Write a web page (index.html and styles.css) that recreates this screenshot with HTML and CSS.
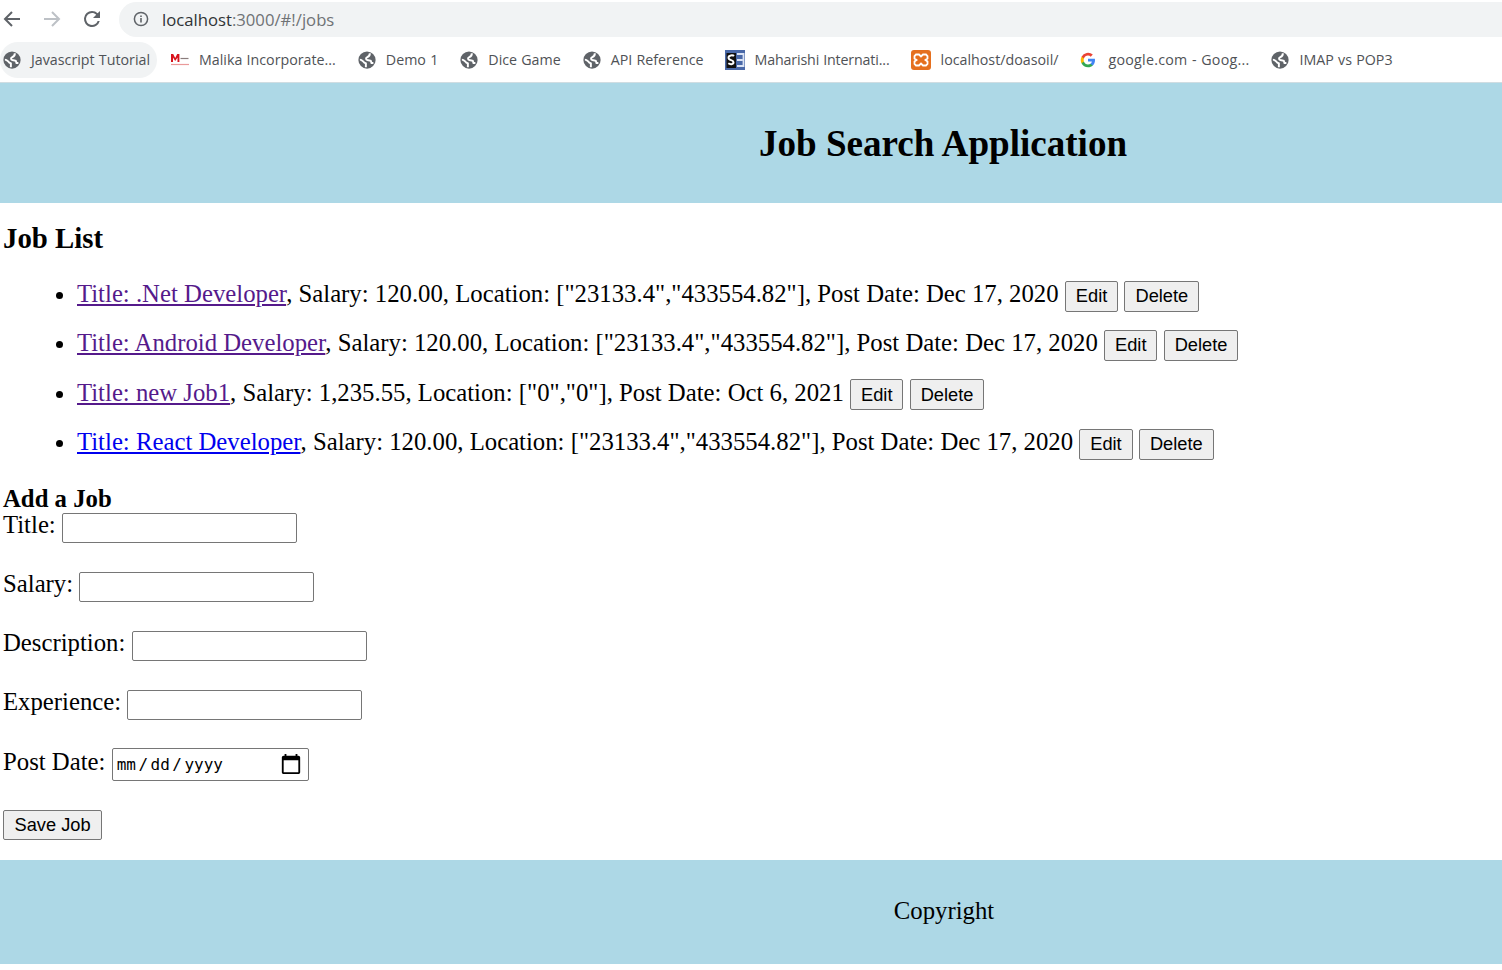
FILE: index.html
```html
<!DOCTYPE html>
<html lang="en">
<head>
<meta charset="utf-8">
<title>Job Search Application</title>
<link rel="stylesheet" href="styles.css">
</head>
<body>
<div class="toolbar">
  <svg class="nav" width="20" height="20" viewBox="0 0 20 20"><path d="M18 10H3M10 3l-7 7 7 7" fill="none" stroke="#5f6368" stroke-width="2"/></svg>
  <svg class="nav" width="20" height="20" viewBox="0 0 20 20"><path d="M2 10h15M10 3l7 7-7 7" fill="none" stroke="#bdc1c6" stroke-width="2"/></svg>
  <svg class="nav reload" width="24" height="24" viewBox="0 0 24 24"><path d="M17.65 6.35A7.96 7.96 0 0 0 12 4a8 8 0 1 0 7.73 10h-2.08A6 6 0 1 1 12 6c1.66 0 3.14.69 4.22 1.78L13 11h7V4z" fill="#5f6368"/></svg>
  <div class="omnibox">
    <svg width="16" height="16" viewBox="0 0 16 16"><circle cx="8" cy="8" r="6.600" fill="none" stroke="#5f6368" stroke-width="1.500"/><path d="M7.200 7h1.600v4.400H7.200zM7.200 4.500h1.600v1.600H7.200z" fill="#5f6368"/></svg>
    <span class="host">localhost</span><span class="path">:3000/#!/jobs</span>
  </div>
</div>
<div class="bookmarks">
  <div class="bm active"><svg class="fav" viewBox="0 0 24 24"><use href="#globe"/></svg><span>Javascript Tutorial</span></div>
  <div class="bm"><svg class="fav fav-m" viewBox="0 0 20 20"><path d="M1 12V4h2.200L5.200 8l2-4h2.200v8H7.500V7.500L5.200 11 3 7.500V12z" fill="#d8141c"/><path d="M10.500 8.500h8" stroke="#8a7d7d" stroke-width="1.200"/><path d="M1 14.500h18" stroke="#ea9a9a" stroke-width="1.200"/></svg><span>Malika Incorporate...</span></div>
  <div class="bm"><svg class="fav" viewBox="0 0 24 24"><use href="#globe"/></svg><span>Demo 1</span></div>
  <div class="bm"><svg class="fav" viewBox="0 0 24 24"><use href="#globe"/></svg><span>Dice Game</span></div>
  <div class="bm"><svg class="fav" viewBox="0 0 24 24"><use href="#globe"/></svg><span>API Reference</span></div>
  <div class="bm bm-narrow"><svg class="fav fav-wide" viewBox="0 0 20 20"><rect width="20" height="20" fill="#4a69a8"/><rect x="1.500" y="3" width="9.500" height="15" fill="#111"/><path d="M9 6C8 5 3.500 4.800 3.500 7.800c0 3 5 1.700 5 4.500 0 2.400-3.500 2.300-5.200 1" fill="none" stroke="#fff" stroke-width="2"/><path d="M12 4h6.500v12H12M12 10h5.500" fill="none" stroke="#dbe4f5" stroke-width="1.800"/></svg><span>Maharishi Internati...</span></div>
  <div class="bm"><svg class="fav fav-wide" viewBox="0 0 20 20"><rect width="20" height="20" rx="3" fill="#e5701f"/><path d="M5 4.500h3l2 2 2-2h3l1.500 1.500v2.500L14.500 10l2 1.500V14L15 15.500h-3l-2-2-2 2H5L3.500 14v-2.500l2-1.500-2-1.500V6z" fill="none" stroke="#fff" stroke-width="1.800"/></svg><span>localhost/doasoil/</span></div>
  <div class="bm bm-google"><svg class="fav fav-g" viewBox="0 0 24 24"><path d="M22.500 12.300c0-.8-.1-1.500-.2-2.200H12v4.200h5.900a5 5 0 0 1-2.200 3.300v2.700h3.500c2.100-1.900 3.300-4.700 3.300-8z" fill="#4285f4"/><path d="M12 23c3 0 5.400-1 7.200-2.700l-3.500-2.700c-1 .7-2.200 1-3.700 1-2.800 0-5.200-1.900-6.100-4.500H2.300v2.800A11 11 0 0 0 12 23z" fill="#34a853"/><path d="M5.900 14.100a6.600 6.600 0 0 1 0-4.200V7.100H2.300a11 11 0 0 0 0 9.800z" fill="#fbbc05"/><path d="M12 5.400c1.600 0 3 .5 4.100 1.600l3.100-3.100A11 11 0 0 0 2.300 7.100l3.600 2.800C6.800 7.300 9.200 5.400 12 5.400z" fill="#ea4335"/></svg><span>google.com - Goog...</span></div>
  <div class="bm"><svg class="fav" viewBox="0 0 24 24"><use href="#globe"/></svg><span>IMAP vs POP3</span></div>
  <svg class="defs" width="0" height="0"><defs><g id="globe"><circle cx="12" cy="12" r="11.500" fill="#5f6368"/><path d="M15.500 3c1 3-1.500 4.500-3.500 5.500s-1.500 3 .5 3.500l4.500 1 1 3h2.500M2.500 11.500c3 0 4 2.500 6 4l2 1v5" fill="none" stroke="#fff" stroke-width="2.600"/></g></defs></svg>
</div>

<header class="site-header"><h1>Job Search Application</h1></header>

<main class="content">
  <h2>Job List</h2>
  <ul class="jobs">
    <li><a class="visited" href="#">Title: .Net Developer</a>, Salary: 120.00, Location: ["23133.4","433554.82"], Post Date: Dec 17, 2020 <button>Edit</button> <button>Delete</button></li>
    <li><a class="visited" href="#">Title: Android Developer</a>, Salary: 120.00, Location: ["23133.4","433554.82"], Post Date: Dec 17, 2020 <button>Edit</button> <button>Delete</button></li>
    <li><a class="visited" href="#">Title: new Job1</a>, Salary: 1,235.55, Location: ["0","0"], Post Date: Oct 6, 2021 <button>Edit</button> <button>Delete</button></li>
    <li><a class="fresh" href="#">Title: React Developer</a>, Salary: 120.00, Location: ["23133.4","433554.82"], Post Date: Dec 17, 2020 <button>Edit</button> <button>Delete</button></li>
  </ul>
  <form class="job-form">
    <h3>Add a Job</h3>
    <p><label>Title: <input type="text"></label></p>
    <p><label>Salary: <input type="text"></label></p>
    <p><label>Description: <input type="text"></label></p>
    <p class="exp-row"><label>Experience: <input type="text"></label></p>
    <p class="date-row"><label>Post Date: <input type="date"></label></p>
    <p class="save-row"><button type="button">Save Job</button></p>
  </form>
</main>

<footer class="site-footer">Copyright</footer>
</body>
</html>
```
FILE: styles.css
```css
html, body { margin: 0; padding: 0; background: #fff; }
body { font-family: "Liberation Serif", "Times New Roman", serif; font-size: 24.75px; color: #000; overflow: hidden; }

.toolbar { height: 38px; display: flex; align-items: center; font-family: "Open Sans", sans-serif; }
.nav { margin-left: 2px; margin-right: 18px; flex: none; }
.nav.reload { margin-left: 0; margin-right: 15px; }
.omnibox { flex: 1; height: 35px; background: #f1f3f4; border-radius: 18px 0 0 18px; display: flex; align-items: center; padding-left: 14px; font-size: 16.7px; }
.omnibox svg { margin-right: 13px; }
.host { color: #303336; }
.path { color: #6f7275; }

.bookmarks { height: 44px; display: flex; align-items: center; font-family: "Open Sans", sans-serif; font-size: 14.25px; word-spacing: .5px; color: #4f5256; border-bottom: 1px solid #d0dde2; }
.bm { display: flex; align-items: center; height: 36px; padding: 0 8px 0 3px; margin-right: 11px; white-space: nowrap; border-radius: 18px; }
.bm span { margin-top: -2px; }
.bm.active { background: #f1f3f4; padding-right: 7px; }
.bm-google span { letter-spacing: .25px; }
.bm-narrow span { letter-spacing: -.15px; }
.fav { width: 18px; height: 18px; margin-right: 10px; flex: none; }
.fav-wide { width: 20px; height: 20px; margin-left: -1px; }
.fav-m { width: 20px; height: 20px; margin-left: -1px; margin-right: 9px; }
.fav-g { width: 16px; height: 16px; margin-left: 0; margin-right: 12px; }
.defs { position: absolute; }

.site-header { height: 120px; box-sizing: border-box; padding: 2px 0 0 384px; background: #add8e6; display: flex; align-items: center; justify-content: center; }
.site-header h1 { margin: 0; font-size: 37.1px; font-weight: bold; line-height: 1.1; }

.content { padding: 0 3px; }
.content h2 { font-size: 28.8px; margin: 18px 0 0; line-height: 34px; }
.jobs { margin: 24px 0 0; padding-left: 74px; }
.jobs li { margin-bottom: 16.9px; line-height: 29px; }
.jobs a.visited { color: #551a8b; }
.jobs a.fresh { color: #0000ee; }

button { font-family: "Liberation Sans", Arial, sans-serif; font-size: 18.25px; height: 31px; padding: 1px 10px; background: #efefef; border: 1px solid #767676; border-radius: 2px; color: #000; }

.job-form h3 { font-size: 24.75px; margin: 27px 0 0; line-height: 23px; }
.job-form p { margin: 0 0 25.5px; line-height: 29px; }
.job-form p.exp-row { margin-bottom: 26.5px; }
.job-form p.date-row { margin-bottom: 27.5px; }
.job-form p.save-row { margin-bottom: 19.5px; }
.job-form input[type="text"] { width: 229px; height: 26px; padding: 1px 2px; border: 1px solid #767676; border-radius: 2px; }
.job-form input[type="date"] { width: 190px; height: 29px; padding: 1px 2px 1px 3px; border: 1px solid #767676; border-radius: 2px; font-family: "DejaVu Sans Mono", monospace; font-size: 16px; }
.job-form input[type="date"]::-webkit-datetime-edit-text { padding: 0 1.5px; }
.job-form input[type="date"]::-webkit-calendar-picker-indicator { width: 20px; height: 22px; padding: 0; margin: 0 5px 0 0; background-size: 22px 22px; background-position: center; }
.job-form button { height: 30px; padding: 1px 10.5px; }

.site-footer { height: 104px; box-sizing: border-box; padding: 0 0 2px 386px; background: #add8e6; display: flex; align-items: center; justify-content: center; }
```
